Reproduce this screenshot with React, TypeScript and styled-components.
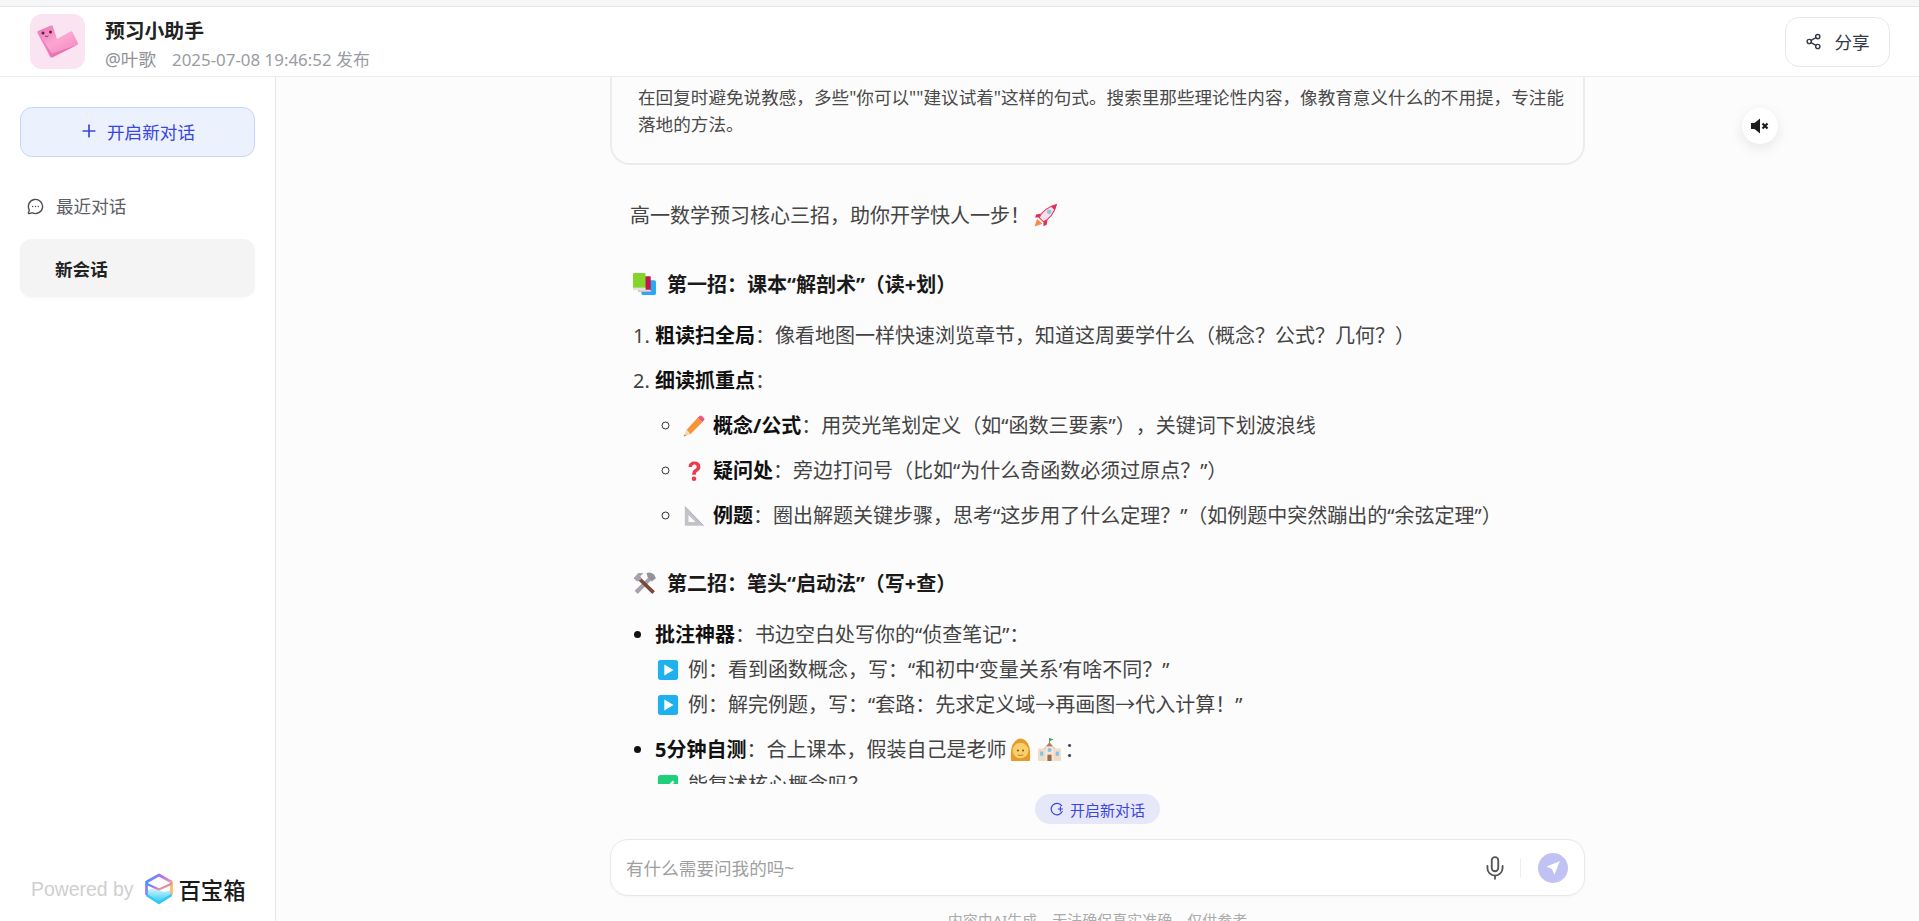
import React from "react";
import styled, { createGlobalStyle } from "styled-components";
import { Plus, MessageCircleMore, Share2, Mic } from "lucide-react";

const Global = createGlobalStyle`
  html, body { margin: 0; padding: 0; height: 100%; overflow: hidden; background: #fff; }
  body { font-family: "Noto Sans", "Noto Sans CJK SC", sans-serif; color: #222; text-spacing-trim: space-all; }
  #root { height: 100%; }
  * { box-sizing: border-box; }
`;

const Page = styled.div`
  height: 921px;
  display: flex;
  flex-direction: column;
  overflow: hidden;
`;

const TopStrip = styled.div`
  height: 7px;
  flex: none;
  background: #f5f6f8;
  border-bottom: 1px solid #e6e6e6;
`;

const Header = styled.header`
  height: 70px;
  flex: none;
  background: #fff;
  border-bottom: 1px solid #ececec;
  display: flex;
  align-items: center;
  padding: 0 29px 0 30px;
`;

const Avatar = styled.div`
  width: 55px;
  height: 55px;
  border-radius: 12px;
  overflow: hidden;
  background: #fbe4f2;
  flex: none;
`;

const TitleBlock = styled.div`
  margin-left: 20px;
  padding-top: 6px;
  display: flex;
  flex-direction: column;
  gap: 3px;
  flex: 1;
`;

const Title = styled.div`
  font-size: 19.8px;
  font-weight: 700;
  line-height: 26px;
  color: #222;
`;

const Meta = styled.div`
  display: flex;
  align-items: baseline;
  gap: 16px;
  line-height: 24px;
  color: #9a9ca3;
`;

const Author = styled.span`
  font-size: 17.6px;
  color: #8f9197;
`;

const Published = styled.span`
  font-size: 16.9px;
`;

const ShareButton = styled.button`
  width: 105px;
  height: 50px;
  border: 1px solid #e8e8ea;
  border-radius: 14px;
  background: #fff;
  display: flex;
  align-items: center;
  justify-content: center;
  gap: 12px;
  font: inherit;
  font-size: 17.6px;
  color: #333a47;
  padding: 0;
`;

const Body = styled.div`
  flex: 1;
  min-height: 0;
  display: flex;
`;

const Sidebar = styled.aside`
  width: 276px;
  flex: none;
  background: #fff;
  border-right: 1px solid #e8e8e8;
  padding: 30px 20px 0 20px;
  display: flex;
  flex-direction: column;
`;

const NewChatButton = styled.button`
  height: 50px;
  flex: none;
  border: 1px solid #c8d5fb;
  border-radius: 12px;
  background: #ebf1fd;
  color: #3b45e0;
  font: inherit;
  font-size: 17.6px;
  display: flex;
  align-items: center;
  justify-content: center;
  gap: 8px;
  padding: 0 1px 2px 0;
`;

const SectionLabel = styled.div`
  margin-top: 36px;
  display: flex;
  align-items: center;
  gap: 12px;
  padding-left: 7px;
  font-size: 17.6px;
  line-height: 26px;
  color: #5b5e66;
`;

const SessionItem = styled.div`
  margin-top: 20px;
  height: 58px;
  border-radius: 12px;
  background: #f4f4f4;
  box-shadow: 0 1px 3px rgba(0, 0, 0, 0.03);
  display: flex;
  align-items: center;
  padding-left: 35px;
  font-size: 17.6px;
  font-weight: 700;
  color: #222;
`;

const Powered = styled.div`
  margin-top: auto;
  margin-bottom: 16px;
  margin-left: 11px;
  display: flex;
  align-items: center;
  gap: 10px;
  font-family: "Liberation Sans", sans-serif;
  font-size: 19.4px;
  color: #cfcfcf;
  white-space: nowrap;
`;

const Brand = styled.span`
  display: flex;
  align-items: center;
  gap: 3px;
  font-family: "Noto Sans CJK SC", sans-serif;
  font-size: 22.4px;
  font-weight: 500;
  color: #1a1a1a;
`;

const Main = styled.main`
  flex: 1;
  min-width: 0;
  background: #fcfcfc;
  display: flex;
  flex-direction: column;
  align-items: center;
  position: relative;
`;

const Scroller = styled.div`
  width: 975px;
  height: 707px;
  flex: none;
  overflow: hidden;
`;

const Prompt = styled.div`
  border: 2px solid #ececee;
  border-top: none;
  border-radius: 0 0 20px 20px;
  padding: 7px 16px 25px 26px;
  font-size: 17.6px;
  line-height: 27px;
  color: #4a4a4a;
`;

const Answer = styled.div`
  padding: 0 19px 0 20px;
  font-size: 20px;
  line-height: 35px;
  color: #444;
  strong { color: #111; font-weight: 700; }
`;

const Lead = styled.p`
  margin: 33px 0 0;
`;

const Heading = styled.h3<{ $top: number }>`
  margin: ${(p) => p.$top}px 0 0;
  font-size: 20px;
  line-height: 35px;
  font-weight: 700;
  color: #1a1a1a;
  display: flex;
  align-items: center;
  gap: 10px;
  padding-left: 2px;
`;

const Ol = styled.ol`
  margin: 16px 0 0;
  padding-left: 25px;
`;

const Ul = styled.ul`
  margin: 16px 0 0;
  padding-left: 25px;
  list-style: disc;
  li::marker { color: #111; }
`;

const SubUl = styled.ul`
  margin: 10px 0 0;
  padding-left: 28px;
  list-style: circle;
  li::marker { color: #333; }
`;

const Li = styled.li`
  margin-bottom: 10px;
`;

const Emoji = styled.svg`
  width: 22px;
  height: 22px;
  vertical-align: -4px;
  margin-right: 8px;
`;

const PlayEmoji = styled(Emoji)`
  margin-left: 2px;
  margin-right: 9px;
`;

const InlineEmoji = styled.svg`
  width: 25px;
  height: 25px;
  vertical-align: -5px;
  margin: 0 2px;
`;

const RocketEmoji = styled(InlineEmoji)`
  margin-left: 3px;
`;

const StandaloneEmoji = styled.svg`
  width: 25px;
  height: 25px;
  flex: none;
`;

const MuteButton = styled.button`
  position: absolute;
  top: 31px;
  right: 141px;
  width: 36px;
  height: 36px;
  border: none;
  border-radius: 50%;
  background: #fff;
  box-shadow: 0 4px 14px rgba(0, 0, 0, 0.09);
  display: flex;
  align-items: center;
  justify-content: center;
  padding: 0;
`;

const NewTopicPill = styled.button`
  margin-top: 10px;
  width: 125px;
  height: 30px;
  flex: none;
  border: none;
  border-radius: 15px;
  background: #e6e8f9;
  color: #3b45e0;
  font: inherit;
  font-size: 15px;
  display: flex;
  align-items: center;
  justify-content: center;
  gap: 6px;
  padding: 0;
`;

const InputBar = styled.div`
  margin-top: 15px;
  width: 975px;
  height: 57px;
  flex: none;
  background: #fff;
  border: 1px solid #e8e8e8;
  border-radius: 18px;
  box-shadow: 0 1px 3px rgba(0, 0, 0, 0.03);
  display: flex;
  align-items: center;
  padding: 0 16px 0 15px;
`;

const Placeholder = styled.div`
  flex: 1;
  font-size: 17.6px;
  color: #9f9f9f;
`;

const Divider = styled.span`
  width: 1px;
  height: 20px;
  background: #eeeeee;
  margin: 0 17px 0 12px;
`;

const SendButton = styled.button`
  width: 30px;
  height: 30px;
  border: none;
  border-radius: 50%;
  background: #bfc2f3;
  display: flex;
  align-items: center;
  justify-content: center;
  padding: 0;
`;

const Disclaimer = styled.div`
  margin-top: 13px;
  font-size: 15px;
  line-height: 22px;
  color: #ababab;
  white-space: nowrap;
`;

const AvatarArt = () => (
  <svg width="55" height="55" viewBox="0 0 55 55">
    <defs>
      <linearGradient id="lg" x1="0.1" y1="0" x2="0.8" y2="1">
        <stop offset="0" stopColor="#ee76b6" />
        <stop offset="0.5" stopColor="#fba6d2" />
        <stop offset="1" stopColor="#f384bf" />
      </linearGradient>
    </defs>
    <path d="M8 17 L21 11.5 Q22.5 11 23 12.5 L27 25 L40.5 17.5 Q42 17 42.5 18 L48 29 Q48.5 30.5 47 31 L22.5 43.5 Q21 44 20 43 L7.5 19 Q7 17.5 8 17Z" fill="url(#lg)" />
    <path d="M9 21 L21 43 Q22 43.6 23 43 L47 31 L22 39.5Z" fill="#e25aa2" opacity=".55" />
    <circle cx="13" cy="19" r="1.5" fill="#5a2342" />
    <circle cx="20.5" cy="18" r="1.5" fill="#5a2342" />
    <path d="M15 22 q2 1.5 3.5 -.4" stroke="#5a2342" strokeWidth=".8" fill="none" />
  </svg>
);

const LogoMark = () => (
  <svg width="32" height="32" viewBox="0 0 32 32">
    <defs>
      <linearGradient id="hex" x1="0" y1="0" x2="1" y2="0.6">
        <stop offset="0" stopColor="#2f9bff" />
        <stop offset="0.5" stopColor="#b56cff" />
        <stop offset="1" stopColor="#ffb45e" />
      </linearGradient>
      <linearGradient id="wave" x1="0" y1="0" x2="0" y2="1">
        <stop offset="0" stopColor="#d4f7fc" />
        <stop offset="1" stopColor="#2ec6f7" />
      </linearGradient>
    </defs>
    <path d="M3 18 Q10 13 16 17 T29 16 V22.5 L16 30 L3 22.5Z" fill="url(#wave)" />
    <path d="M3.5 22 V9 L16 2 L28.5 9 V22" fill="none" stroke="url(#hex)" strokeWidth="2.6" strokeLinejoin="round" />
    <path d="M3.5 22 L16 30 L28.5 22" fill="none" stroke="#30c9f5" strokeWidth="2.6" strokeLinejoin="round" />
    <path d="M4 11 L16 16.5 L28 11" fill="none" stroke="url(#hex)" strokeWidth="2.2" strokeLinecap="round" />
  </svg>
);

const MuteIcon = () => (
  <svg width="20" height="20" viewBox="0 0 20 20">
    <path d="M1 7 H4.5 L10 2.5 V17.5 L4.5 13 H1Z" fill="#1c1c1c" />
    <path d="M12.5 7.5 L17.5 12.5 M17.5 7.5 L12.5 12.5" stroke="#1c1c1c" strokeWidth="2.2" />
  </svg>
);

const PillIcon = () => (
  <svg width="14" height="14" viewBox="0 0 14 14" fill="none" stroke="#3b45e0" strokeWidth="1.2">
    <path d="M11.6 3.6 A5.8 5.8 0 1 0 12.2 9.6" strokeLinecap="round" />
    <path d="M7.8 7 H13 M10.4 4.5 V9.5" />
  </svg>
);

const SendIcon = () => (
  <svg width="16" height="16" viewBox="0 0 16 16">
    <path d="M15 1 L1.5 6.6 L7 9 L9.4 14.8Z" fill="#fff" />
  </svg>
);

const Rocket = () => (
  <RocketEmoji viewBox="0 0 24 24">
    <path d="M4 15 L1.5 22.5 L9 20Z" fill="#f7894a" />
    <path d="M8 10 L3 11 L2 14 L6 14Z M14 16 L13 21 L10 22 L10 18Z" fill="#dd2e5c" />
    <path d="M6 14 Q10 5 22.5 1.5 Q19 14 10 18Z" fill="#f7dfe6" stroke="#e43a64" strokeWidth="1" />
    <path d="M17 3 L22.5 1.5 L21 7Z" fill="#dd2e5c" />
    <circle cx="15.5" cy="8.5" r="2.2" fill="#8cc7ea" />
  </RocketEmoji>
);

const Books = () => (
  <StandaloneEmoji viewBox="0 0 24 24">
    <rect x="9" y="8" width="14" height="14" rx="1.5" fill="#2aa9ee" />
    <rect x="6" y="4" width="12" height="15" rx="1" fill="#c4154d" />
    <rect x="6" y="17" width="12" height="2" fill="#d9d9e0" />
    <rect x="1" y="1" width="12" height="16" rx="1" fill="#84d42e" />
    <rect x="1" y="15" width="12" height="2.4" fill="#dfe6d6" />
  </StandaloneEmoji>
);

const Tools = () => (
  <StandaloneEmoji viewBox="0 0 24 24">
    <path d="M19 3 L21.5 5.5 L5.5 22 L2.5 19Z" fill="#a7a2ac" />
    <path d="M7 5 L22 19.5 L19.5 22 L4.5 7.5Z" fill="#7a4a38" />
    <path d="M1.5 7 L6 2 L11 2 L8 5 L9 8 L5 10Z" fill="#a7a2ac" />
    <path d="M14 2 Q17 0.5 21 3 L23 7 L19 10 L15 6Z" fill="#968f9c" />
  </StandaloneEmoji>
);

const Pencil = () => (
  <Emoji viewBox="0 0 24 24">
    <path d="M4 16 L16 3 L21 8 L8 21Z" fill="#f79438" />
    <path d="M16 3 L18.5 0.8 Q19.5 0 20.5 1 L23 3.5 Q24 4.5 23 5.5 L21 8Z" fill="#ef5579" />
    <path d="M4 16 L8 21 L1 23.5Z" fill="#f7d5a8" />
    <path d="M1.8 21 L3.5 22.6 L1 23.5Z" fill="#c07a3c" />
  </Emoji>
);

const Question = () => (
  <Emoji viewBox="0 0 24 24">
    <path d="M6 7.5 Q6.5 1.5 12.5 1.5 Q19 1.5 19 7.5 Q19 11 15 13 Q14 13.7 14 16 H10 Q10 11.5 13 10 Q15 9 15 7.5 Q15 5 12.5 5 Q10 5 9.8 7.5Z" fill="#ee3a4c" />
    <circle cx="12" cy="20.5" r="2.5" fill="#ee3a4c" />
  </Emoji>
);

const Triangle = () => (
  <Emoji viewBox="0 0 24 24">
    <path d="M2 1.5 L22.5 22.5 H2Z M6 11 V18.5 H13.5Z" fill="#c3c2c6" fillRule="evenodd" />
    <path d="M2 1.5 L22.5 22.5" stroke="#a99bd0" strokeWidth=".9" />
  </Emoji>
);

const Play = () => (
  <PlayEmoji viewBox="0 0 24 24">
    <rect x="1" y="1" width="22" height="22" rx="3" fill="#1fb0ee" />
    <path d="M8 6 L18 12 L8 18Z" fill="#fff" />
  </PlayEmoji>
);

const Check = () => (
  <PlayEmoji viewBox="0 0 24 24">
    <rect x="1" y="1" width="22" height="22" rx="3" fill="#1fd07a" />
    <path d="M6 12 L10.5 16.5 L18 8" fill="none" stroke="#fff" strokeWidth="2.6" />
  </PlayEmoji>
);

const Woman = () => (
  <InlineEmoji viewBox="0 0 24 24">
    <path d="M3 23 Q1 3 12 1.5 Q23 3 21 23Z" fill="#e69a2a" />
    <circle cx="12" cy="13" r="7.5" fill="#fbcf6b" />
    <circle cx="9.5" cy="13" r="1" fill="#7a5a20" />
    <circle cx="14.5" cy="13" r="1" fill="#7a5a20" />
    <path d="M9.5 17 q2.5 1.4 5 0" stroke="#c5812a" fill="none" />
  </InlineEmoji>
);

const School = () => (
  <InlineEmoji viewBox="0 0 24 24">
    <path d="M12 1 V6" stroke="#8a8a8a" />
    <path d="M12 1 L16 2.5 L12 4Z" fill="#2ab24e" />
    <path d="M6 12 L12 5 L18 12Z" fill="#b57a5a" />
    <rect x="1" y="11" width="22" height="12" fill="#f0dcc8" />
    <rect x="8" y="9" width="8" height="14" fill="#f7e6d4" />
    <rect x="10" y="17" width="4" height="6" fill="#9a6a4c" />
    <rect x="3" y="14" width="3" height="4" fill="#7fc4e8" />
    <rect x="18" y="14" width="3" height="4" fill="#7fc4e8" />
    <circle cx="12" cy="12.5" r="2" fill="#7fc4e8" />
  </InlineEmoji>
);

export default function App() {
  return (
    <Page>
      <Global />
      <TopStrip />
      <Header>
        <Avatar>
          <AvatarArt />
        </Avatar>
        <TitleBlock>
          <Title>预习小助手</Title>
          <Meta>
            <Author>@叶歌</Author>
            <Published>2025-07-08 19:46:52 发布</Published>
          </Meta>
        </TitleBlock>
        <ShareButton>
          <Share2 size={17} color="#333a47" />
          分享
        </ShareButton>
      </Header>
      <Body>
        <Sidebar>
          <NewChatButton>
            <Plus size={20} color="#3b45e0" />
            开启新对话
          </NewChatButton>
          <SectionLabel>
            <MessageCircleMore size={17} color="#4a4d55" />
            最近对话
          </SectionLabel>
          <SessionItem>新会话</SessionItem>
          <Powered>
            Powered by
            <Brand>
              <LogoMark />
              百宝箱
            </Brand>
          </Powered>
        </Sidebar>
        <Main>
          <MuteButton>
            <MuteIcon />
          </MuteButton>
          <Scroller>
            <Prompt>
              在回复时避免说教感，多些"你可以""建议试着"这样的句式。搜索里那些理论性内容，像教育意义什么的不用提，专注能落地的方法。
            </Prompt>
            <Answer>
              <Lead>
                高一数学预习核心三招，助你开学快人一步！
                <Rocket />
              </Lead>
              <Heading $top={34}>
                <Books />
                第一招：课本“解剖术”（读+划）
              </Heading>
              <Ol>
                <Li>
                  <strong>粗读扫全局</strong>：像看地图一样快速浏览章节，知道这周要学什么（概念？公式？几何？）
                </Li>
                <Li>
                  <strong>细读抓重点</strong>：
                  <SubUl>
                    <Li>
                      <Pencil />
                      <strong>概念/公式</strong>：用荧光笔划定义（如“函数三要素”），关键词下划波浪线
                    </Li>
                    <Li>
                      <Question />
                      <strong>疑问处</strong>：旁边打问号（比如“为什么奇函数必须过原点？”）
                    </Li>
                    <Li>
                      <Triangle />
                      <strong>例题</strong>：圈出解题关键步骤，思考“这步用了什么定理？”（如例题中突然蹦出的“余弦定理”）
                    </Li>
                  </SubUl>
                </Li>
              </Ol>
              <Heading $top={33}>
                <Tools />
                第二招：笔头“启动法”（写+查）
              </Heading>
              <Ul>
                <Li>
                  <strong>批注神器</strong>：书边空白处写你的“侦查笔记”：
                  <br />
                  <Play />
                  例：看到函数概念，写：“和初中‘变量关系’有啥不同？”
                  <br />
                  <Play />
                  例：解完例题，写：“套路：先求定义域→再画图→代入计算！”
                </Li>
                <Li>
                  <strong>5分钟自测</strong>：合上课本，假装自己是老师
                  <Woman />
                  <School />：
                  <br />
                  <Check />
                  能复述核心概念吗？
                </Li>
              </Ul>
            </Answer>
          </Scroller>
          <NewTopicPill>
            <PillIcon />
            开启新对话
          </NewTopicPill>
          <InputBar>
            <Placeholder>有什么需要问我的吗~</Placeholder>
            <Mic size={26} color="#555" strokeWidth={1.7} />
            <Divider />
            <SendButton>
              <SendIcon />
            </SendButton>
          </InputBar>
          <Disclaimer>内容由AI生成，无法确保真实准确，仅供参考</Disclaimer>
        </Main>
      </Body>
    </Page>
  );
}
